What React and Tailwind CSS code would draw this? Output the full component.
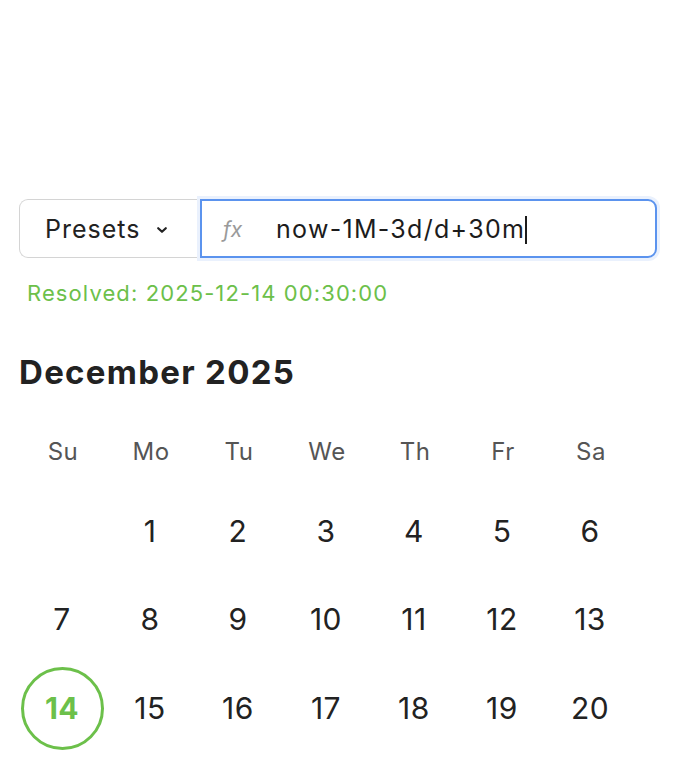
import React from 'react';

const weekdays = ['Su', 'Mo', 'Tu', 'We', 'Th', 'Fr', 'Sa'];
const weeks = [
  [null, 1, 2, 3, 4, 5, 6],
  [7, 8, 9, 10, 11, 12, 13],
  [14, 15, 16, 17, 18, 19, 20],
];

export default function App() {
  return (
    <div className="w-[678px] h-[770px] bg-white overflow-hidden" style={{ fontFamily: 'Inter, "Noto Sans", sans-serif' }}>
      <div className="pt-[199px] pl-[19px] pr-[21px]">
        {/* expression input */}
        <div className="flex h-[59px]">
          <button className="w-[181px] flex items-center gap-[16px] pl-[25px] pt-[2px] border border-[#d4d4d4] border-r-0 rounded-l-[9px] bg-white">
            <span className="text-[25px] tracking-[1px] text-[#222]">Presets</span>
            <svg width="12" height="8" viewBox="0 0 12 8" className="mt-[1px]">
              <path d="M2.2 2.2l3.8 3.6 3.8-3.6" fill="none" stroke="#222" strokeWidth="2.2" strokeLinecap="round" strokeLinejoin="round" />
            </svg>
          </button>
          <div className="flex-1 flex items-center pt-[2px] border-2 border-[#5b93ee] rounded-r-[9px] shadow-[0_0_0_3px_#eaf1fd]">
            <span className="w-[74px] pl-[21px] text-[21px] italic text-[#9a9a9a]">fx</span>
            <span className="text-[25px] tracking-[1.3px] text-[#1c1c1c]">now-1M-3d/d+30m</span>
            <span className="w-[2px] h-[28px] bg-[#1c1c1c]" />
          </div>
        </div>
        <div className="mt-[21px] pl-[8px] text-[22px] tracking-[1.1px] text-[#6cc04a] leading-[28px]">Resolved: 2025-12-14 00:30:00</div>

        {/* calendar */}
        <div className="mt-[45px] text-[33px] tracking-[1.3px] font-bold text-[#222] leading-[40px]">December 2025</div>
        <div className="mt-[45px] grid grid-cols-[repeat(7,88px)]">
          {weekdays.map((d) => (
            <div key={d} className="text-center text-[24px] tracking-[0.5px] text-[#555] leading-[30px]">{d}</div>
          ))}
        </div>
        <div className="mt-[20px] -ml-[1px] grid grid-cols-[repeat(7,88px)] grid-rows-[repeat(3,88.5px)]">
          {weeks.flat().map((day, i) => (
            <div key={i} className="flex items-center justify-center">
              {day === 14 ? (
                <div className="w-[83px] h-[83px] rounded-full border-[3px] border-[#6cc04a] flex items-center justify-center text-[30px] tracking-[0.5px] font-bold text-[#6cc04a]">
                  {day}
                </div>
              ) : (
                <span className="text-[30px] tracking-[0.5px] text-[#222]">{day}</span>
              )}
            </div>
          ))}
        </div>
      </div>
    </div>
  );
}
